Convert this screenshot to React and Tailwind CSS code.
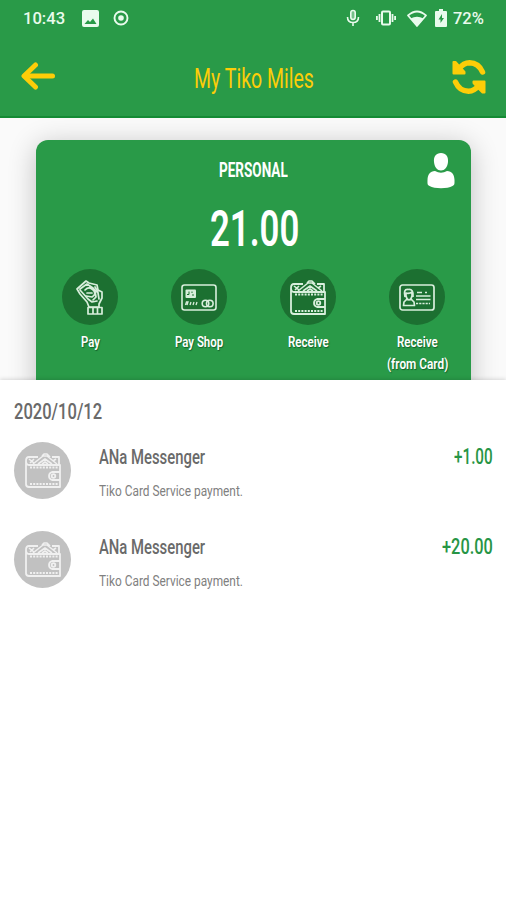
import { useLayoutEffect, useRef, useState } from 'react'

const ACTIONS = [
  { icon: CashIcon, lines: [['Pay', 19]] },
  { icon: CardIcon, lines: [['Pay Shop', 48]] },
  { icon: WalletIcon, lines: [['Receive', 41]] },
  { icon: IdIcon, lines: [['Receive', 41], ['(from Card)', 61]] },
]

const TRANSACTIONS = [
  { id: 1, name: 'ANa Messenger', note: 'Tiko Card Service payment.', amount: '+1.00', width: 39 },
  { id: 2, name: 'ANa Messenger', note: 'Tiko Card Service payment.', amount: '+20.00', width: 51 },
]

// Condenses a line of text horizontally to the given width
function Narrow({ width, className = '', children }) {
  const ref = useRef(null)
  const [scale, setScale] = useState(1)

  useLayoutEffect(() => {
    setScale(width / ref.current.offsetWidth)
  }, [width, children])

  return (
    <span className={`block shrink-0 ${className}`} style={{ width }}>
      <span ref={ref} className="inline-block origin-left whitespace-nowrap align-top" style={{ transform: `scaleX(${scale})` }}>
        {children}
      </span>
    </span>
  )
}

function CashIcon() {
  return (
    <svg viewBox="0 0 28 36" className="h-9 w-7" fill="none" stroke="currentColor" strokeWidth="1.7" strokeLinejoin="round" strokeLinecap="round">
      <path d="M1 10 10 2l3 2 8 2 1 5 4 2v6l-3 6v3H13l-2-5-7-8Z" />
      <path d="m4 10 7-5 6 4 5 5 1 6M4 11l8 9 4 3 5-1" />
      <path d="M9 11q4-4 8 0t-1 7l-6-1M11 14h5M14 8l5 4 1 6-3 3M19 8l3 5" />
      <path d="M12 28.500h14V35H12ZM17 29v6M21.500 29v6" />
    </svg>
  )
}

function CardIcon() {
  return (
    <svg viewBox="0 0 36 27" className="h-[27px] w-9" fill="none" stroke="currentColor" strokeWidth="1.6">
      <rect x="1" y="1" width="34" height="25" rx="2.5" />
      <rect x="4.500" y="5.500" width="10.500" height="8.500" rx="1" fill="currentColor" stroke="none" />
      <path d="M8 7.500v3H6M11 7.500v1.500M11 11h2" stroke="#1c7031" strokeWidth="1" />
      <path d="m4.500 21 1-3 1.500 0-1 3M9 21l1-3M12 21l1-3M15 21l1-3" strokeWidth="1.300" />
      <circle cx="24.500" cy="19.500" r="3.300" />
      <circle cx="28.800" cy="19.500" r="3.300" />
    </svg>
  )
}

function WalletIcon() {
  return (
    <svg viewBox="0 0 36 35" className="h-[35px] w-9" fill="none" stroke="currentColor" strokeWidth="1.800" strokeLinejoin="round">
      <path d="M1 8v23q0 3 3 3h31V12H4q-3 0-3-4 0-4 3-4h9M27 4h7v8" />
      <path d="m8 11 10-8h4l10 8M13 11l7-5 7 5M17 11l3-2 3 2M17 3l2-2h3l3 3" strokeWidth="1.600" />
      <path d="m4 6 5 4m0-4-4 4M31 6l-3 2" strokeWidth="1.600" />
      <path d="M5 14.500h28M5 31h28" strokeDasharray="2 1.200" strokeWidth="1.800" />
      <path d="M35 19h-8q-3 1-3 4t3 4h8" />
      <circle cx="28.500" cy="23" r="1.800" />
    </svg>
  )
}

function IdIcon() {
  return (
    <svg viewBox="0 0 36 27" className="h-[27px] w-9" fill="none" stroke="currentColor" strokeWidth="1.700" strokeLinejoin="round">
      <rect x="1" y="1" width="34" height="25" rx="2.500" />
      <path d="M6 13q-2-8 3-7.500 6-1 5 7.500M7 9q3 1 6-1v4q-1 4-3 4t-3-4ZM8 15l-3 3-.5 3.500h11L15 18l-3-3" />
      <path d="M18 8.500h5M26 8.500h2M17 12h14.500M17 15.500h14.500" />
      <path d="M17 19.500h14" strokeDasharray="2.200 1" />
    </svg>
  )
}

function StatusBar() {
  return (
    <div className="flex h-9 items-center pl-[23px] pr-[22px] text-[17px] leading-none font-medium text-[#e9fbed]">
      <Narrow width={42}>10:43</Narrow>
      <svg viewBox="0 0 17 17" className="ml-[17px] size-[17px]">
        <path fill="currentColor" fillRule="evenodd" d="M2 0h13q2 0 2 2v13q0 2-2 2H2q-2 0-2-2V2q0-2 2-2ZM2.500 14h12L11 8.500 8 12 6 10Z" />
      </svg>
      <svg viewBox="0 0 16 16" className="ml-[14px] size-4" fill="none" stroke="currentColor">
        <circle cx="8" cy="8" r="6.500" strokeWidth="1.900" />
        <circle cx="8" cy="8" r="2.800" fill="currentColor" stroke="none" />
      </svg>

      <svg viewBox="0 0 14 18" className="ml-auto h-[18px] w-3.5" fill="none" stroke="currentColor" strokeWidth="1.600">
        <rect x="4.800" y="1.500" width="4.400" height="9" rx="2.200" fill="currentColor" fillOpacity="0.4" />
        <path d="M1.500 8q0 5.500 5.500 5.500T12.500 8M7 13.500V17" />
      </svg>
      <svg viewBox="0 0 20 16" className="ml-4 h-4 w-5" fill="none" stroke="currentColor" strokeWidth="2">
        <rect x="6" y="1.500" width="8" height="13" rx="1" />
        <path d="M3.500 4v8M.9 6v4M16.500 4v8M19.100 6v4" strokeWidth="1.800" />
      </svg>
      <svg viewBox="0 0 20 17" className="ml-[11px] h-[17px] w-5">
        <path d="M1 5.500Q10-2.500 19 5.500L10 16Z" fill="none" stroke="currentColor" strokeWidth="1.700" strokeLinejoin="round" />
        <path d="M3.500 8.500Q10 5 16.500 8.500L10 16Z" fill="currentColor" />
      </svg>
      <svg viewBox="0 0 12 18" className="ml-2 h-[18px] w-3">
        <path d="M4 0h4v2h3q1 0 1 1v14q0 1-1 1H1q-1 0-1-1V3q0-1 1-1h3Z" fill="currentColor" />
        <path d="M7 5 3.500 10.500h2V14l3.500-5H7Z" fill="#299a48" />
      </svg>
      <Narrow width={31} className="ml-1.5">72%</Narrow>
    </div>
  )
}

function NavBar() {
  return (
    <div className="flex h-[82px] items-center justify-between border-b-2 border-[#148b34] pl-[21px] pr-[19px] text-[#fdcd08]">
      <svg viewBox="0 0 34 28" className="h-7 w-[34px]" fill="none" stroke="currentColor" strokeWidth="5" strokeLinecap="round" strokeLinejoin="round">
        <path d="M14.500 3 3 14l11.500 11" />
        <path d="M4 14h27.500" />
      </svg>
      <Narrow width={120} className="ml-0.5 pt-[7px] text-[27px] leading-none">My Tiko Miles</Narrow>
      <svg viewBox="0 0 36 36" className="mt-px size-9" fill="none" stroke="currentColor" strokeWidth="5.500" strokeLinecap="round">
        <path d="M8 10Q12.500 3.800 18.500 3.800 27.500 4 31.500 13M4.500 23Q8.500 32.200 17.500 32.200 23.500 32.200 28 26" />
        <path d="M2.500 3h2l4 4.500 5 5.500v1.500h-11ZM33.500 33.500h-2l-4-4-5-5.500V22.500h11Z" fill="currentColor" strokeWidth="2" strokeLinejoin="round" />
      </svg>
    </div>
  )
}

function BalanceCard() {
  return (
    <section className="mx-auto h-[260px] w-[435px] rounded-t-xl bg-[#299a48] text-white shadow-[0_5px_28px_rgba(0,0,0,0.24)]">
      <div className="grid h-[60px] grid-cols-[1fr_68px_1fr] items-center">
        <Narrow width={69} className="col-start-2 text-[21px] leading-6 font-bold">PERSONAL</Narrow>
        <svg viewBox="0 0 28 36" className="mr-4 mt-0.5 h-9 w-7 justify-self-end" fill="currentColor">
          <path d="M14 0c5 0 7.500 3.500 7 9-.4 5-3.500 8.500-7 8.500S7.400 14 7 9C6.500 3.500 9 0 14 0Z" />
          <path d="M8 18q6 3.500 12 0c5 .5 7.300 3 7.500 9 .1 4 0 5-2 6-5 3-18 3-23 0-2-1-2.100-2-2-6C.7 21 3 18.500 8 18Z" />
        </svg>
      </div>
      <Narrow width={89} className="mx-auto pl-px text-[50px] leading-[58px] font-semibold">21.00</Narrow>
      <div className="mt-[11px] flex">
        {ACTIONS.map(({ icon: Icon, lines }, i) => (
          <button key={i} className="flex w-[109px] shrink-0 flex-col items-center">
            <span className="mb-1.5 flex size-14 items-center justify-center rounded-full bg-[#1c7031] text-[#d8eedc]">
              <Icon />
            </span>
            {lines.map(([text, width]) => (
              <Narrow key={text} width={width} className="text-left text-[15.5px] leading-[22px] font-semibold [text-shadow:1px_1px_1px_#14602b]">{text}</Narrow>
            ))}
          </button>
        ))}
      </div>
    </section>
  )
}

function Transaction({ item }) {
  return (
    <li className="flex h-[89.5px] items-start">
      <span className="flex size-[57px] shrink-0 items-center justify-center rounded-full bg-[#c1c1c1] text-[#f0f0f0]">
        <WalletIcon />
      </span>
      <div className="ml-7 pt-[3.500px]">
        <Narrow width={106} className="text-[21px] leading-6 font-medium text-[#6a6a6a]">{item.name}</Narrow>
        <Narrow width={144} className="mt-3 text-[15.500px] leading-5 text-[#808080]">{item.note}</Narrow>
      </div>
      <Narrow width={item.width} className="ml-auto pt-[3.500px] text-[21.500px] leading-6 font-medium text-[#279545]">{item.amount}</Narrow>
    </li>
  )
}

export default function App() {
  return (
    <div className="flex h-[900px] w-[506px] flex-col overflow-hidden bg-[#fafafa] font-['Roboto',sans-serif]">
      <header className="shrink-0 bg-[#299a48]">
        <StatusBar />
        <NavBar />
      </header>
      <div className="h-[262px] shrink-0 overflow-hidden pt-[22px]">
        <BalanceCard />
      </div>
      <main className="z-10 flex-1 bg-white pl-3.5 pr-[13px] pt-[21px] shadow-[0_-1px_4px_rgba(0,0,0,0.14)]">
        <Narrow width={88} className="text-[22px] leading-[22px] font-medium text-[#6a6a6a]">2020/10/12</Narrow>
        <ul className="pt-[18.500px]">
          {TRANSACTIONS.map((item) => (
            <Transaction key={item.id} item={item} />
          ))}
        </ul>
      </main>
    </div>
  )
}
